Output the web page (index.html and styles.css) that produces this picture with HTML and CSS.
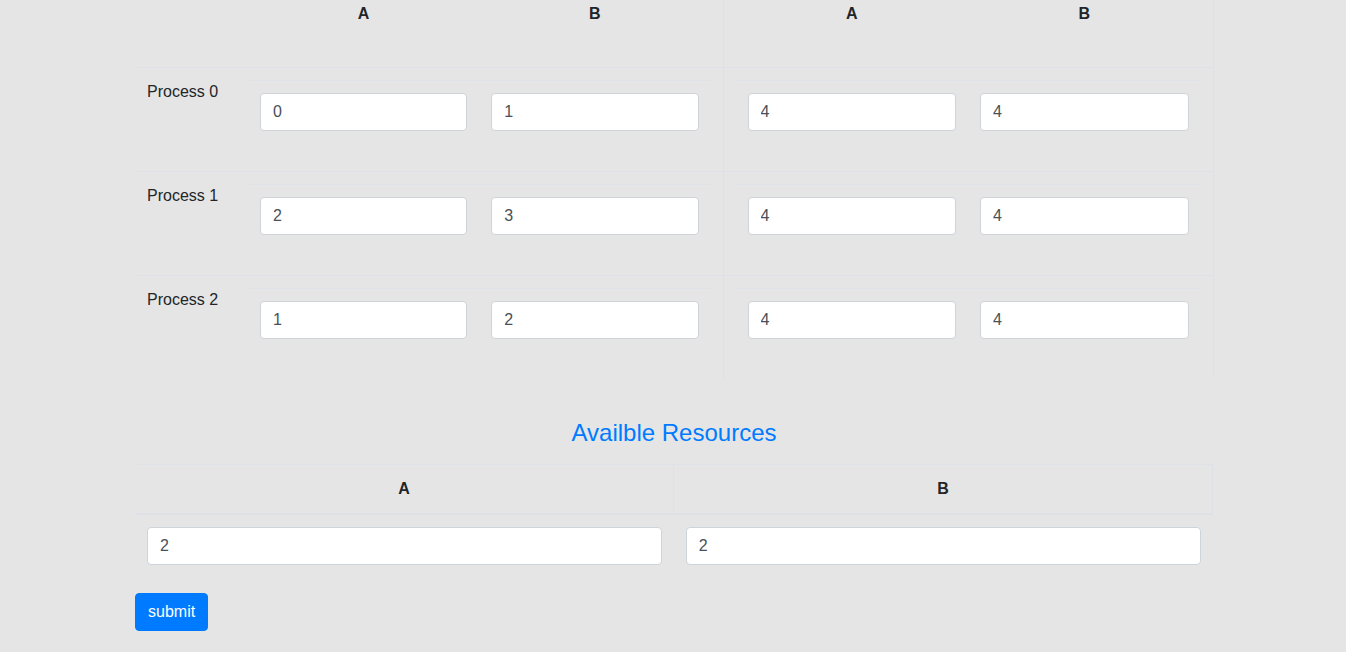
FILE: index.html
```html
<!DOCTYPE html>
<html lang="en">
<head>
<meta charset="utf-8">
<title>Resources</title>
<link rel="stylesheet" href="styles.css">
</head>
<body>
<div class="page">
  <table class="matrix">
    <colgroup>
      <col class="col-label">
      <col class="col-alloc">
      <col class="col-max">
    </colgroup>
    <thead>
      <tr>
        <th class="label"></th>
        <th class="block">
          <table class="head-inner"><tr><th>A</th><th>B</th></tr></table>
        </th>
        <th class="block">
          <table class="head-inner"><tr><th>A</th><th>B</th></tr></table>
        </th>
      </tr>
    </thead>
    <tbody>
      <tr>
        <td class="label">Process 0</td>
        <td class="block"><table class="inner"><tr><td><input class="field" value="0"></td><td><input class="field" value="1"></td></tr></table></td>
        <td class="block"><table class="inner"><tr><td><input class="field" value="4"></td><td><input class="field" value="4"></td></tr></table></td>
      </tr>
      <tr>
        <td class="label">Process 1</td>
        <td class="block"><table class="inner"><tr><td><input class="field" value="2"></td><td><input class="field" value="3"></td></tr></table></td>
        <td class="block"><table class="inner"><tr><td><input class="field" value="4"></td><td><input class="field" value="4"></td></tr></table></td>
      </tr>
      <tr>
        <td class="label">Process 2</td>
        <td class="block"><table class="inner"><tr><td><input class="field" value="1"></td><td><input class="field" value="2"></td></tr></table></td>
        <td class="block"><table class="inner"><tr><td><input class="field" value="4"></td><td><input class="field" value="4"></td></tr></table></td>
      </tr>
    </tbody>
  </table>

  <h4 class="title">Availble Resources</h4>

  <table class="avail">
    <thead>
      <tr><th>A</th><th>B</th></tr>
    </thead>
    <tbody>
      <tr>
        <td><input class="field" value="2"></td>
        <td><input class="field" value="2"></td>
      </tr>
    </tbody>
  </table>

  <button class="btn" type="button">submit</button>
</div>
</body>
</html>
```

FILE: styles.css
```css
html, body {
  margin: 0;
  padding: 0;
  background: #e5e5e5;
}

body {
  font-family: "Liberation Sans", Arial, sans-serif;
  font-size: 16px;
  line-height: 24px;
  color: #212529;
}

.page {
  width: 1078px;
  margin: 0 auto;
  padding: 0 0 40px 2px;
}

table {
  border-collapse: collapse;
  table-layout: fixed;
  width: 100%;
}

.matrix {
  margin-bottom: 16px;
}

.col-label { width: 101px; }
.col-alloc { width: 487px; }
.col-max { width: 490px; }

.matrix > thead > tr > th {
  padding: 0 12px;
  vertical-align: top;
}

.matrix > tbody > tr > td {
  padding: 12px;
  border-top: 1px solid #dee2e6;
  vertical-align: top;
}

.matrix .block {
  border-right: 1px solid #dee2e6;
}

.label {
  text-align: left;
  font-weight: 400;
}

.head-inner th {
  padding: 2px 12px 41px;
  font-weight: 700;
  text-align: center;
}

.inner {
  margin-bottom: 16px;
}

.inner td {
  padding: 12px;
  border-top: 1px solid #dee2e6;
  vertical-align: top;
}

.field {
  display: block;
  box-sizing: border-box;
  width: 100%;
  height: 38px;
  margin: 0;
  padding: 6px 12px;
  font-family: inherit;
  font-size: 16px;
  line-height: 24px;
  color: #495057;
  background: #fff;
  border: 1px solid #ced4da;
  border-radius: 4px;
}

.title {
  margin: 40px 0 16px;
  font-size: 24px;
  line-height: 28.8px;
  font-weight: 400;
  color: #007bff;
  text-align: center;
}

.avail {
  margin-bottom: 16px;
}

.avail th {
  padding: 12px;
  border-top: 1px solid #dee2e6;
  border-right: 1px solid #dee2e6;
  border-bottom: 2px solid #dee2e6;
  font-weight: 700;
  text-align: center;
}

.avail td {
  padding: 12px;
}

.btn {
  display: inline-block;
  padding: 6px 12px;
  font-family: inherit;
  font-size: 16px;
  line-height: 24px;
  color: #fff;
  background: #007bff;
  border: 1px solid #007bff;
  border-radius: 4px;
  cursor: pointer;
}
```
